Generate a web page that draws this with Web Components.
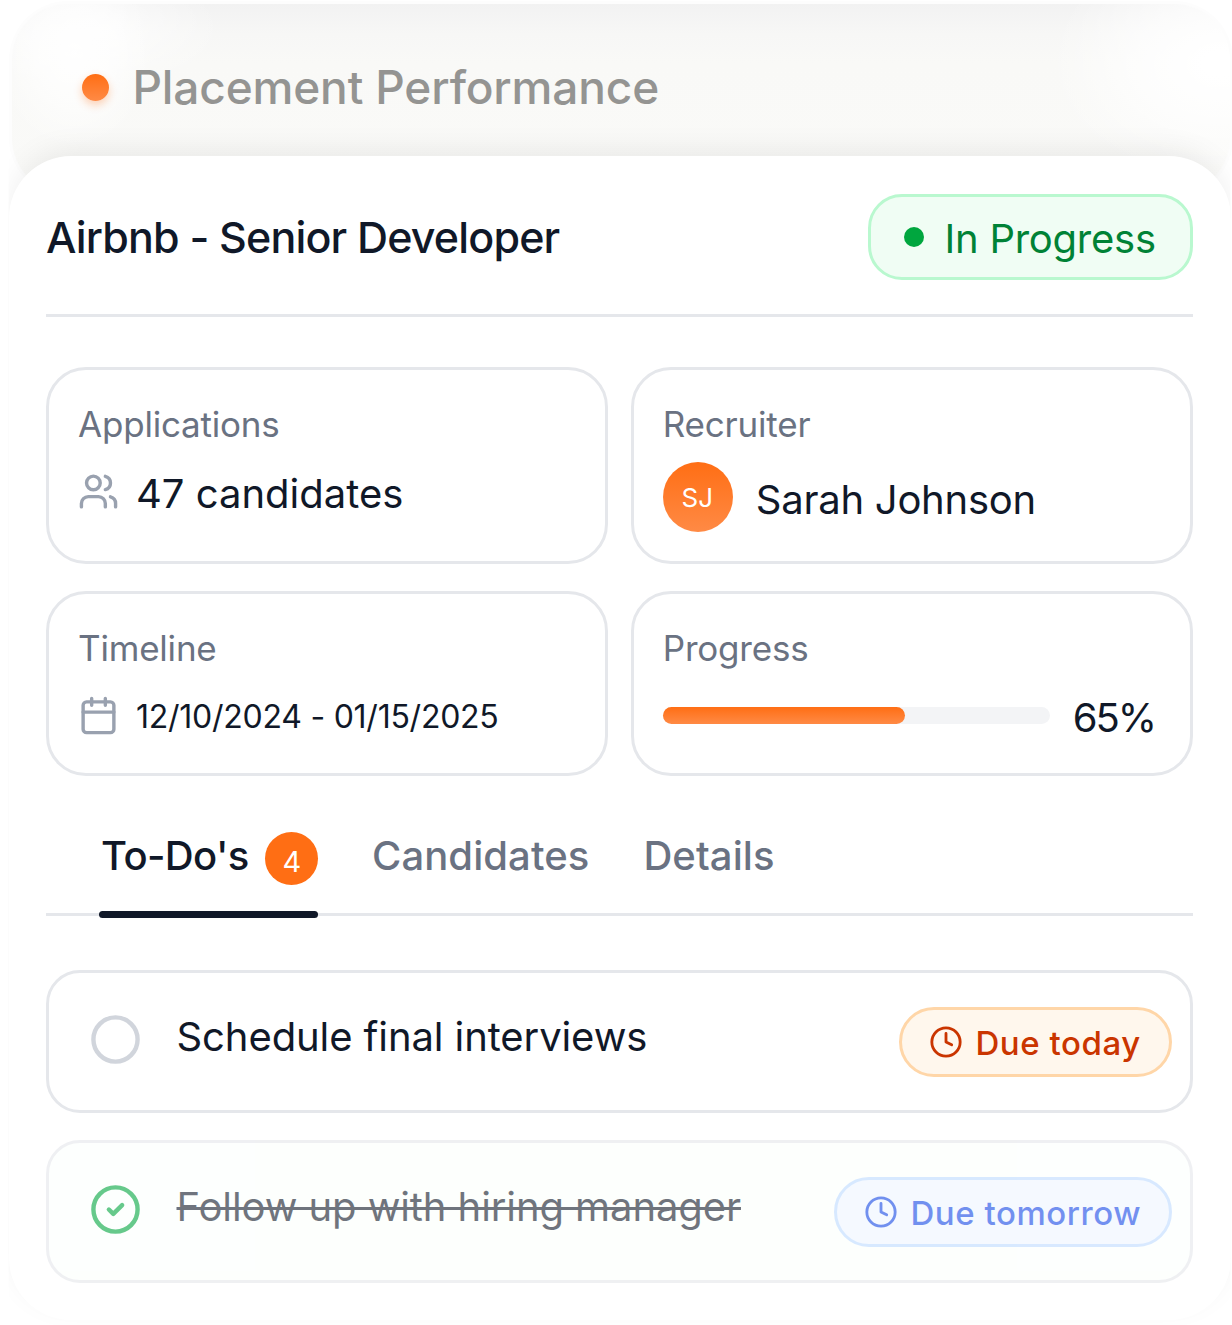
<!DOCTYPE html>
<html lang="en">
<head>
<meta charset="utf-8">
<title>Placement Performance</title>
<style>
html {
    background: #fff;
}
body {
    margin: 0;
    width: 1232px;
    height: 1325px;
    overflow: hidden;
    font-family: Inter, "Liberation Sans", sans-serif;
    color: #101828;
}
</style>
</head>
<body>
<card-stack>
    <back-card slot="back">Placement Performance</back-card>
    <job-card>
        <span slot="title">Airbnb - Senior Developer</span>
        <status-badge slot="status">In Progress</status-badge>
        <stat-card slot="stats" label="Applications">
            <g-icon name="users" size="41"></g-icon>
            <stat-value>47 candidates</stat-value>
        </stat-card>
        <stat-card slot="stats" label="Recruiter" class="person">
            <user-avatar>SJ</user-avatar>
            <stat-value class="name">Sarah Johnson</stat-value>
        </stat-card>
        <stat-card slot="stats" label="Timeline">
            <g-icon name="calendar" size="41"></g-icon>
            <stat-value class="small">12/10/2024 - 01/15/2025</stat-value>
        </stat-card>
        <stat-card slot="stats" label="Progress">
            <progress-bar value="62.6"></progress-bar>
            <stat-value class="percent">65%</stat-value>
        </stat-card>
        <tab-item slot="tabs" class="active" count="4">To-Do's</tab-item>
        <tab-item slot="tabs">Candidates</tab-item>
        <tab-item slot="tabs">Details</tab-item>
        <todo-item>
            Schedule final interviews
            <due-pill slot="due">Due today</due-pill>
        </todo-item>
        <todo-item class="done">
            Follow up with hiring manager
            <due-pill slot="due" class="later">Due tomorrow</due-pill>
        </todo-item>
    </job-card>
</card-stack>

<script>
const ICONS = {
    users: `
        <path d="M16 21v-2a4 4 0 0 0-4-4H6a4 4 0 0 0-4 4v2"/>
        <circle cx="9" cy="7" r="4"/>
        <path d="M22 21v-2a4 4 0 0 0-3-3.87"/>
        <path d="M16 3.13a4 4 0 0 1 0 7.75"/>`,
    calendar: `
        <rect x="3" y="4" width="18" height="18" rx="2"/>
        <path d="M8 2v4M16 2v4M3 10h18"/>`,
    clock: `
        <circle cx="12" cy="12" r="10"/>
        <path d="M12 6v6l4 2"/>`,
    circle: `
        <circle cx="12" cy="12" r="10"/>`,
    check: `
        <circle cx="12" cy="12" r="10"/>
        <path d="m9 12 2 2 4-4"/>`,
};

class BaseElement extends HTMLElement {
    constructor() {
        super();
        this.attachShadow({mode: "open"});
    }

    connectedCallback() {
        this.shadowRoot.innerHTML = this.render();
    }
}

class Icon extends BaseElement {
    render() {
        const size = this.getAttribute("size");
        return `
        <style>
        :host {
            display: block;
            flex: none;
            color: #99a1af;
        }
        :host([name=clock]) {
            color: inherit;
        }
        :host([name=circle]) {
            color: #d1d5dc;
        }
        :host([name=check]) {
            color: #00a63e;
        }
        svg {
            display: block;
        }
        </style>
        <svg width="${size}" height="${size}" viewBox="0 0 24 24" fill="none"
            stroke="currentColor" stroke-width="2" stroke-linecap="round"
            stroke-linejoin="round">${ICONS[this.getAttribute("name")]}</svg>
        `;
    }
}

class CardStack extends BaseElement {
    render() {
        return `
        <style>
        :host {
            display: flex;
            flex-direction: column;
            padding: 4px 0 0 8.5px;
        }
        </style>
        <slot name="back"></slot>
        <slot></slot>
        `;
    }
}

class BackCard extends BaseElement {
    render() {
        return `
        <style>
        :host {
            display: flex;
            align-items: center;
            box-sizing: border-box;
            width: 1218px;
            height: 190px;
            margin: 0 0 -38px 3.5px;
            padding: 0 69.5px 24px;
            border-radius: 56px;
            box-shadow: 0 0 0 3px #fdfdfd;
            background:
                radial-gradient(ellipse 78px 96px at 62px 50px, rgba(255, 255, 255, .9), rgba(255, 255, 255, .6) 50%, transparent),
                radial-gradient(ellipse 130px 60px at 80px 26px, rgba(255, 255, 255, .7), rgba(255, 255, 255, .4) 50%, transparent),
                radial-gradient(ellipse 170px 120px at 1208px 60px, #fff 10%, rgba(255, 255, 255, .65) 50%, transparent),
                linear-gradient(#f2f2f2, #f7f7f6 30px, #f9f9f7 60px, #fafaf8);
            color: #949492;
            font-size: 46px;
            font-weight: 500;
            line-height: 60px;
            letter-spacing: -.15px;
        }
        i {
            width: 27px;
            height: 27px;
            margin-right: 24px;
            border-radius: 50%;
            background: linear-gradient(#ff6e14, #ff8a45);
            box-shadow: 0 4px 8px rgba(255, 110, 20, .3);
        }
        </style>
        <i></i>
        <slot></slot>
        `;
    }
}

class JobCard extends BaseElement {
    render() {
        return `
        <style>
        :host {
            position: relative;
            display: flex;
            flex-direction: column;
            box-sizing: border-box;
            width: 1222px;
            height: 1164px;
            padding: 38px 38px 0 37.5px;
            border-radius: 62px;
            background: #fff;
            box-shadow: 0 -10px 30px -6px rgba(0, 0, 0, .08);
            /* the shadow only falls upwards, on the card behind */
            clip-path: inset(-60px 0 -5px 0);
        }
        header {
            display: flex;
            align-items: center;
            justify-content: space-between;
            height: 86px;
            padding-bottom: 34px;
            border-bottom: 3px solid #e5e7eb;
        }
        h2 {
            margin: 0;
            font-size: 43px;
            font-weight: 500;
            line-height: 56px;
            letter-spacing: -.84px;
        }
        section {
            display: grid;
            grid-template-columns: repeat(2, minmax(0, 1fr));
            grid-template-rows: 197px 185px;
            gap: 27px 23px;
            margin-top: 50px;
        }
        nav {
            display: flex;
            gap: 54px;
            height: 83px;
            margin-top: 54px;
            padding-left: 53px;
            border-bottom: 3px solid #e5e7eb;
        }
        main {
            display: flex;
            flex-direction: column;
            gap: 27px;
            margin-top: 54px;
        }
        </style>
        <header>
            <h2><slot name="title"></slot></h2>
            <slot name="status"></slot>
        </header>
        <section><slot name="stats"></slot></section>
        <nav><slot name="tabs"></slot></nav>
        <main><slot></slot></main>
        `;
    }
}

class StatusBadge extends BaseElement {
    render() {
        return `
        <style>
        :host {
            display: flex;
            align-items: center;
            box-sizing: border-box;
            width: 325px;
            height: 86px;
            padding-left: 33px;
            border: 3px solid #b9f8cf;
            border-radius: 34px;
            background: #f0fdf4;
            color: #008236;
            font-size: 40px;
            line-height: 52px;
            letter-spacing: -.25px;
        }
        i {
            width: 20px;
            height: 20px;
            margin-right: 21px;
            border-radius: 50%;
            background: #00a63e;
        }
        span {
            padding-top: 4px;
            white-space: nowrap;
        }
        </style>
        <i></i>
        <span><slot></slot></span>
        `;
    }
}

class StatCard extends BaseElement {
    render() {
        return `
        <style>
        :host {
            display: flex;
            flex-direction: column;
            box-sizing: border-box;
            padding: 33px 36px 0 29px;
            border: 3px solid #e5e7eb;
            border-radius: 40px;
        }
        label {
            color: #6a7282;
            font-size: 35px;
            line-height: 42px;
            letter-spacing: -.2px;
        }
        div {
            display: flex;
            align-items: center;
            height: 52px;
            margin-top: 20px;
        }
        :host(.person) div {
            height: 70px;
            margin-top: 17px;
        }
        </style>
        <label>${this.getAttribute("label")}</label>
        <div><slot></slot></div>
        `;
    }
}

class StatValue extends BaseElement {
    render() {
        return `
        <style>
        :host {
            display: block;
            margin-left: 17px;
            padding-top: 6px;
            font-size: 40px;
            line-height: 50px;
            white-space: nowrap;
        }
        :host(.small) {
            padding-top: 4px;
            font-size: 32px;
            letter-spacing: -.25px;
        }
        :host(.name) {
            margin-left: 23px;
            letter-spacing: -.25px;
        }
        :host(.percent) {
            margin-left: 23px;
            letter-spacing: -2px;
        }
        </style>
        <slot></slot>
        `;
    }
}

class Avatar extends BaseElement {
    render() {
        return `
        <style>
        :host {
            display: flex;
            align-items: center;
            justify-content: center;
            width: 70px;
            height: 70px;
            border-radius: 50%;
            background: linear-gradient(#ff6e14, #ff8a45);
            color: #fff;
            font-size: 26px;
            text-indent: -1px;
        }
        </style>
        <slot></slot>
        `;
    }
}

class ProgressBar extends BaseElement {
    render() {
        return `
        <style>
        :host {
            display: block;
            flex: none;
            width: 387px;
            height: 17px;
            border-radius: 9px;
            background: #f3f4f6;
        }
        div {
            width: ${this.getAttribute("value")}%;
            height: 100%;
            border-radius: 9px;
            background: linear-gradient(#ff6e14, #ff8a45);
        }
        </style>
        <div></div>
        `;
    }
}

class TabItem extends BaseElement {
    render() {
        const count = this.getAttribute("count");
        return `
        <style>
        :host {
            display: flex;
            align-items: flex-start;
            box-sizing: border-box;
            height: 88px;
            color: #6a7282;
            font-size: 40px;
            font-weight: 500;
            line-height: 52px;
            letter-spacing: .08px;
            white-space: nowrap;
        }
        :host(.active) {
            flex-wrap: wrap;
            justify-content: space-between;
            width: 219px;
            padding-left: 2px;
            color: #101828;
            letter-spacing: -.6px;
        }
        b {
            width: 53px;
            height: 53px;
            margin-top: 2px;
            border-radius: 50%;
            background: #ff6e14;
            color: #fff;
            font-size: 29px;
            font-weight: 400;
            line-height: 59px;
            text-align: center;
        }
        hr {
            width: 219px;
            height: 7px;
            margin: 26px 0 0 -2px;
            border: 0;
            border-radius: 4px;
            background: #101828;
        }
        </style>
        <slot></slot>
        ${count ? `<b>${count}</b><hr>` : ""}
        `;
    }
}

class TodoItem extends BaseElement {
    render() {
        const icon = this.classList.contains("done") ? "check" : "circle";
        return `
        <style>
        :host {
            display: flex;
            align-items: flex-start;
            box-sizing: border-box;
            height: 143px;
            padding: 34px 17.5px 0 39.5px;
            border: 3px solid #e5e7eb;
            border-radius: 34px;
            font-size: 40px;
            line-height: 52px;
            letter-spacing: -.09px;
        }
        :host(.done) {
            opacity: .6;
            background: rgba(240, 253, 244, .2);
        }
        g-icon {
            margin: 6px 35px 0 0;
        }
        p {
            flex: 1;
            margin: 4px 0 0;
            white-space: nowrap;
        }
        :host(.done) p {
            text-decoration: line-through;
            text-decoration-thickness: 3px;
        }
        </style>
        <g-icon name="${icon}" size="53"></g-icon>
        <p><slot></slot></p>
        <slot name="due"></slot>
        `;
    }
}

class DuePill extends BaseElement {
    render() {
        return `
        <style>
        :host {
            display: flex;
            align-items: center;
            box-sizing: border-box;
            width: 273px;
            height: 70px;
            padding-left: 26.5px;
            border: 3px solid #ffd6a8;
            border-radius: 35px;
            background: #fff7ed;
            color: #ca3500;
            font-size: 33px;
            font-weight: 500;
            line-height: 42px;
            letter-spacing: .55px;
            white-space: nowrap;
        }
        :host(.later) {
            width: 338px;
            border-color: #bedbff;
            background: #eff6ff;
            color: #1447e6;
        }
        span {
            margin-left: 13px;
            padding-top: 1px;
        }
        </style>
        <g-icon name="clock" size="34"></g-icon>
        <span><slot></slot></span>
        `;
    }
}

customElements.define("g-icon", Icon);
customElements.define("card-stack", CardStack);
customElements.define("back-card", BackCard);
customElements.define("job-card", JobCard);
customElements.define("status-badge", StatusBadge);
customElements.define("stat-card", StatCard);
customElements.define("stat-value", StatValue);
customElements.define("user-avatar", Avatar);
customElements.define("progress-bar", ProgressBar);
customElements.define("tab-item", TabItem);
customElements.define("todo-item", TodoItem);
customElements.define("due-pill", DuePill);
</script>
</body>
</html>
